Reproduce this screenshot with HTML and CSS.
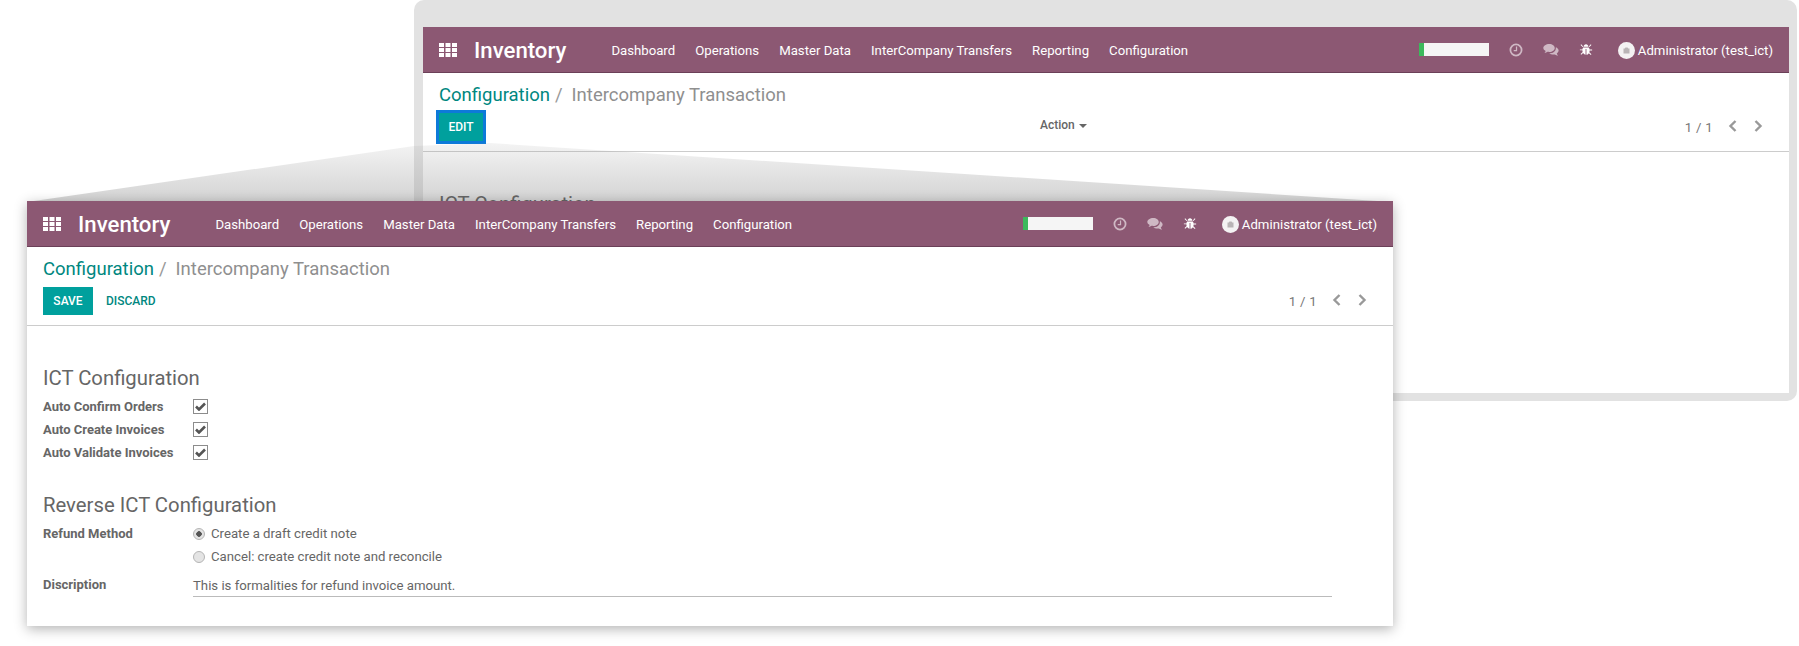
FILE: index.html
```html
<!DOCTYPE html>
<html lang="en">
<head>
    <meta charset="UTF-8">
    <title>Intercompany Transaction</title>
    <link rel="stylesheet" href="styles.css">
</head>
<body>
    <div class="scene">
        <!-- Window behind: read mode -->
        <div class="frame">
            <div class="window">
                <div class="navbar">
                    <svg class="apps" viewBox="0 0 18 14"><path d="M0 0h5v4H0zM6.500 0h5v4h-5zM13 0h5v4h-5zM0 5h5v4H0zM6.500 5h5v4h-5zM13 5h5v4h-5zM0 10h5v4H0zM6.500 10h5v4h-5zM13 10h5v4h-5z"/></svg>
                    <span class="brand">Inventory</span>
                    <ul class="menu">
                        <li>Dashboard</li>
                        <li>Operations</li>
                        <li>Master Data</li>
                        <li>InterCompany Transfers</li>
                        <li>Reporting</li>
                        <li>Configuration</li>
                    </ul>
                    <div class="systray">
                        <div class="progress"><div class="progress-fill"></div></div>
                        <svg class="tray-icon dim" viewBox="0 0 16 16"><circle cx="8" cy="8" r="6.400" fill="none" stroke="currentColor" stroke-width="2"/><path d="M8.600 4v4.800H5.400" fill="none" stroke="currentColor" stroke-width="1.400"/></svg>
                        <svg class="tray-icon dim wide" viewBox="0 0 18 16"><path d="M7 1c3.600 0 6.300 2 6.300 4.600S10.600 10.200 7 10.200c-.7 0-1.300-.1-1.900-.2C4 10.800 2.900 11.300 1.500 11.500c.7-.8 1.200-1.600 1.400-2.500C1.200 8.100.2 7 .2 5.600.2 3 3.400 1 7 1z"/><path d="M14.500 4.800c1.900.8 3.200 2.200 3.200 3.900 0 1.300-.8 2.500-2.100 3.300.2.900.7 1.700 1.400 2.500-1.400-.2-2.500-.7-3.600-1.500-.6.1-1.200.2-1.900.2-1.700 0-3.300-.5-4.400-1.300 3.900-.1 7.400-2.400 7.400-5.700 0-.4 0-.9 0-1.400z"/></svg>
                        <svg class="tray-icon" viewBox="0 0 16 16"><path d="M5.200 4.200C5.400 2.500 6.500 1.400 8 1.400s2.600 1.100 2.800 2.800zM4.700 5.200h6.600c.5.700.7 1.500.8 2.300h2.900v1h-2.900c0 .8-.1 1.500-.3 2.100l2.400 2.200-.7.800-2.200-2c-.6 1-1.500 1.700-2.800 1.900V6.800h-1V13.300c-1.300-.2-2.200-.9-2.800-1.900l-2.200 2-.7-.8 2.400-2.200c-.2-.6-.3-1.300-.3-2.100H1v-1h2.900c.1-.8.300-1.600.8-2.300z"/><path d="M1.800 2.200l.7-.7 2.300 2.500-.7.700zM14.200 2.200l-.7-.7-2.300 2.500.7.700z"/></svg>
                        <div class="user">
                            <svg class="avatar" viewBox="0 0 17 17"><circle cx="8.500" cy="8.500" r="8.500" fill="#f4f2f3"/><path d="M5.500 6.500h1.300l.6-1h2.200l.6 1h1.300v5h-6z" fill="#b9b4b6"/></svg>
                            <span>Administrator (test_ict)</span>
                        </div>
                    </div>
                </div>
                <div class="control-panel">
                    <div class="breadcrumb"><a>Configuration</a><span class="slash">/</span><span class="current">Intercompany Transaction</span></div>
                    <div class="buttons">
                        <div class="buttons-left"><span class="btn btn-focus">EDIT</span></div>
                        <span class="action">Action<i class="caret"></i></span>
                        <div class="pager">
                            <span>1 / 1</span>
                            <svg class="chevron" viewBox="0 0 10 14"><path d="M7.500 2L2.500 7l5 5" fill="none" stroke="currentColor" stroke-width="2.400"/></svg>
                            <svg class="chevron" viewBox="0 0 10 14"><path d="M2.500 2l5 5-5 5" fill="none" stroke="currentColor" stroke-width="2.400"/></svg>
                        </div>
                    </div>
                </div>
                <div class="sheet">
                    <h2 class="above-wedge">ICT Configuration</h2>
                </div>
            </div>
        </div>

        <div class="wedge"></div>

        <!-- Window in front: edit mode -->
        <div class="window window-front">
            <div class="navbar">
                <svg class="apps" viewBox="0 0 18 14"><path d="M0 0h5v4H0zM6.500 0h5v4h-5zM13 0h5v4h-5zM0 5h5v4H0zM6.500 5h5v4h-5zM13 5h5v4h-5zM0 10h5v4H0zM6.500 10h5v4h-5zM13 10h5v4h-5z"/></svg>
                <span class="brand">Inventory</span>
                <ul class="menu">
                    <li>Dashboard</li>
                    <li>Operations</li>
                    <li>Master Data</li>
                    <li>InterCompany Transfers</li>
                    <li>Reporting</li>
                    <li>Configuration</li>
                </ul>
                <div class="systray">
                    <div class="progress"><div class="progress-fill"></div></div>
                    <svg class="tray-icon dim" viewBox="0 0 16 16"><circle cx="8" cy="8" r="6.400" fill="none" stroke="currentColor" stroke-width="2"/><path d="M8.600 4v4.800H5.400" fill="none" stroke="currentColor" stroke-width="1.400"/></svg>
                    <svg class="tray-icon dim wide" viewBox="0 0 18 16"><path d="M7 1c3.600 0 6.300 2 6.300 4.600S10.600 10.200 7 10.200c-.7 0-1.300-.1-1.900-.2C4 10.800 2.900 11.300 1.500 11.500c.7-.8 1.200-1.600 1.400-2.500C1.200 8.100.2 7 .2 5.600.2 3 3.400 1 7 1z"/><path d="M14.500 4.800c1.900.8 3.200 2.200 3.200 3.900 0 1.300-.8 2.500-2.100 3.300.2.900.7 1.700 1.400 2.500-1.400-.2-2.500-.7-3.600-1.500-.6.1-1.200.2-1.900.2-1.700 0-3.300-.5-4.400-1.300 3.900-.1 7.400-2.400 7.400-5.700 0-.4 0-.9 0-1.400z"/></svg>
                    <svg class="tray-icon" viewBox="0 0 16 16"><path d="M5.200 4.200C5.400 2.500 6.500 1.400 8 1.400s2.600 1.100 2.800 2.800zM4.700 5.200h6.600c.5.700.7 1.500.8 2.300h2.900v1h-2.900c0 .8-.1 1.500-.3 2.100l2.400 2.200-.7.800-2.200-2c-.6 1-1.500 1.700-2.800 1.900V6.800h-1V13.300c-1.300-.2-2.200-.9-2.800-1.900l-2.200 2-.7-.8 2.400-2.200c-.2-.6-.3-1.300-.3-2.100H1v-1h2.900c.1-.8.300-1.600.8-2.300z"/><path d="M1.800 2.200l.7-.7 2.300 2.500-.7.700zM14.200 2.200l-.7-.7-2.300 2.500.7.700z"/></svg>
                    <div class="user">
                        <svg class="avatar" viewBox="0 0 17 17"><circle cx="8.500" cy="8.500" r="8.500" fill="#f4f2f3"/><path d="M5.500 6.500h1.300l.6-1h2.200l.6 1h1.300v5h-6z" fill="#b9b4b6"/></svg>
                        <span>Administrator (test_ict)</span>
                    </div>
                </div>
            </div>
            <div class="control-panel">
                <div class="breadcrumb"><a>Configuration</a><span class="slash">/</span><span class="current">Intercompany Transaction</span></div>
                <div class="buttons">
                    <div class="buttons-left">
                        <span class="btn">SAVE</span>
                        <span class="btn-link">DISCARD</span>
                    </div>
                    <div class="pager">
                        <span>1 / 1</span>
                        <svg class="chevron" viewBox="0 0 10 14"><path d="M7.500 2L2.500 7l5 5" fill="none" stroke="currentColor" stroke-width="2.400"/></svg>
                        <svg class="chevron" viewBox="0 0 10 14"><path d="M2.500 2l5 5-5 5" fill="none" stroke="currentColor" stroke-width="2.400"/></svg>
                    </div>
                </div>
            </div>
            <div class="sheet">
                <h2>ICT Configuration</h2>
                <div class="field">
                    <label>Auto Confirm Orders</label>
                    <span class="checkbox"><svg viewBox="0 0 11 9"><path d="M1 4.500l3 3 6-6" fill="none" stroke="#555" stroke-width="2.600"/></svg></span>
                </div>
                <div class="field">
                    <label>Auto Create Invoices</label>
                    <span class="checkbox"><svg viewBox="0 0 11 9"><path d="M1 4.500l3 3 6-6" fill="none" stroke="#555" stroke-width="2.600"/></svg></span>
                </div>
                <div class="field">
                    <label>Auto Validate Invoices</label>
                    <span class="checkbox"><svg viewBox="0 0 11 9"><path d="M1 4.500l3 3 6-6" fill="none" stroke="#555" stroke-width="2.600"/></svg></span>
                </div>

                <h2 class="second">Reverse ICT Configuration</h2>
                <div class="field">
                    <label>Refund Method</label>
                    <span class="radio radio-on"></span>
                    <span>Create a draft credit note</span>
                </div>
                <div class="field">
                    <label></label>
                    <span class="radio"></span>
                    <span>Cancel: create credit note and reconcile</span>
                </div>
                <div class="field field-text">
                    <label>Discription</label>
                    <div class="text-input">This is formalities for refund invoice amount.</div>
                </div>
            </div>
        </div>
    </div>
</body>
</html>
```

FILE: styles.css
```css
/* Two overlapping app windows on a white canvas */
body {
    margin: 0;
    background-color: #ffffff;
    font-family: 'Roboto', sans-serif;
    font-size: 13.2px;
    color: #666;
    overflow: hidden;
}

.scene {
    position: relative;
    width: 1799px;
    height: 646px;
    overflow: hidden;
}

.frame {
    position: absolute;
    left: 414px;
    top: 0;
    width: 1366px;
    height: 366px;
    padding: 27px 8px 8px 9px;
    background-color: #e2e2e2;
    border-radius: 10px;
}

.frame .window {
    height: 366px;
    overflow: hidden;
    background-color: #ffffff;
}

.frame .buttons-left {
    width: 601px;
}

.wedge {
    position: absolute;
    left: 27px;
    top: 142px;
    width: 1366px;
    height: 60px;
    background: linear-gradient(to bottom, rgba(150, 150, 150, 0.1), rgba(150, 150, 150, 0.42));
    clip-path: polygon(0 100%, 387px 4px, 463px 1px, 100% 100%);
}

.window-front {
    position: absolute;
    z-index: 2;
    left: 27px;
    top: 201px;
    width: 1366px;
    height: 425px;
    background-color: #ffffff;
    box-shadow: 0 3px 12px rgba(0, 0, 0, 0.3);
}

/* Navbar */
.navbar {
    display: flex;
    align-items: center;
    height: 45px;
    padding: 0 16px;
    background-color: #8c5873;
    border-bottom: 1px solid #6b4058;
    color: #ffffff;
}

.apps {
    width: 18px;
    height: 14px;
    fill: #ffffff;
}

.brand {
    margin-left: 17px;
    font-size: 22.2px;
    font-weight: 500;
}

.menu {
    display: flex;
    gap: 20px;
    margin: 0 0 0 45px;
    padding: 1px 0 0 0;
    list-style: none;
}

.systray {
    display: flex;
    align-items: center;
    margin-left: auto;
}

.progress {
    width: 70px;
    height: 13px;
    background-color: #f5f5f5;
}

.progress-fill {
    width: 5px;
    height: 13px;
    background-color: #3cb95c;
}

.tray-icon {
    width: 14px;
    height: 14px;
    margin-left: 20px;
    fill: #ffffff;
    color: #ffffff;
}

.tray-icon.dim {
    fill: #cfb8c4;
    color: #cfb8c4;
}

.tray-icon.wide {
    width: 16px;
}

.user {
    display: flex;
    align-items: center;
    gap: 3px;
    margin-left: 25px;
    padding-top: 1px;
}

.avatar {
    width: 17px;
    height: 17px;
}

/* Control panel */
.control-panel {
    height: 78px;
    padding: 0 16px;
    border-bottom: 1px solid #ccc;
}

.breadcrumb {
    display: flex;
    align-items: center;
    box-sizing: border-box;
    height: 40px;
    padding-top: 4px;
    font-size: 18.5px;
}

.breadcrumb a {
    color: #00877f;
}

.slash {
    margin: 0 9px 0 5px;
    color: #999;
}

.current {
    color: #8f8f8f;
}

.buttons {
    display: flex;
    align-items: center;
    height: 28px;
}

.buttons-left {
    display: flex;
    align-items: center;
    width: 578px;
}

.btn {
    display: flex;
    align-items: center;
    justify-content: center;
    box-sizing: border-box;
    width: 50px;
    height: 28px;
    background-color: #00a09d;
    color: #ffffff;
    font-size: 12px;
    font-weight: 500;
}

.btn-focus {
    height: 34px;
    margin-left: -3px;
    border: 3px solid #0d7ad9;
}

.btn-link {
    margin-left: 13px;
    color: #00877f;
    font-size: 12px;
    font-weight: 500;
}

.action {
    margin-top: -4px;
    font-size: 12px;
    font-weight: 500;
    color: #666;
}

.caret {
    display: inline-block;
    margin-left: 4px;
    vertical-align: middle;
    border-top: 4px solid #666;
    border-left: 4px solid transparent;
    border-right: 4px solid transparent;
}

.pager {
    display: flex;
    align-items: center;
    margin-left: auto;
    padding-right: 10px;
    color: #777;
    letter-spacing: 0.3px;
}

.chevron {
    width: 10px;
    height: 14px;
    margin-top: -2px;
    margin-left: 15px;
    color: #999;
}

/* Form sheet */
.sheet {
    padding: 38px 16px 0 16px;
}

h2 {
    margin: 0 0 3px 0;
    height: 28px;
    line-height: 28px;
    font-size: 20.3px;
    font-weight: 400;
    color: #666;
}

h2.above-wedge {
    position: relative;
    z-index: 1;
}

h2.second {
    margin-top: 27px;
    margin-bottom: 3px;
}

.field {
    display: flex;
    align-items: center;
    height: 23px;
}

.field label {
    width: 150px;
    flex: none;
    font-weight: 700;
    font-size: 13px;
    color: #666;
}

.checkbox {
    display: flex;
    align-items: center;
    justify-content: center;
    box-sizing: border-box;
    width: 15px;
    height: 15px;
    border: 1px solid #8c8c8c;
}

.checkbox svg {
    width: 11px;
    height: 9px;
}

.radio {
    box-sizing: border-box;
    width: 12px;
    height: 12px;
    margin-right: 6px;
    border: 1px solid #b5b5b5;
    border-radius: 50%;
    background-color: #e4e4e4;
}

.radio-on {
    background: radial-gradient(circle, #555 0 2.5px, #e4e4e4 3px);
}

.field-text {
    height: 29px;
    margin-top: 3px;
}

.field-text label {
    margin-top: -3px;
}

.text-input {
    box-sizing: border-box;
    width: 1139px;
    height: 22px;
    padding-top: 3px;
    border-bottom: 1px solid #bbb;
}
```
